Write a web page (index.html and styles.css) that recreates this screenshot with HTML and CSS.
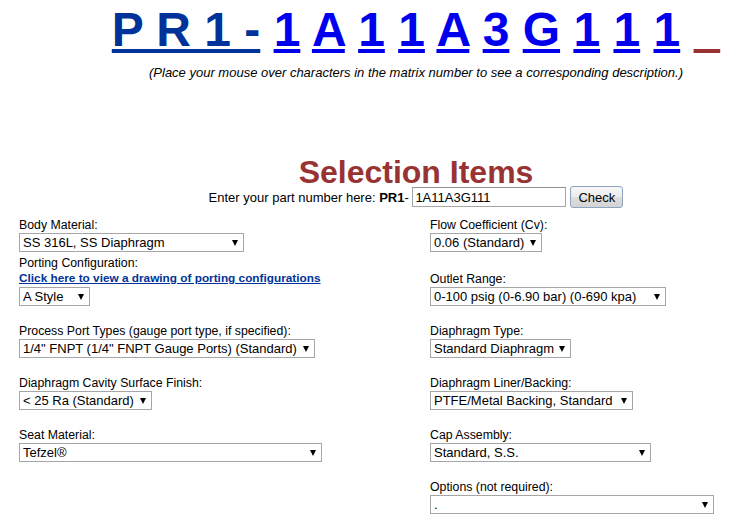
FILE: index.html
```html
<!DOCTYPE html>
<html lang="en">
<head>
    <meta charset="UTF-8">
    <title>Regulator Matrix - Selection Items</title>
    <link rel="stylesheet" href="styles.css">
</head>
<body>
    <div class="matrix">
        <div class="matrix-code">
            <a href="#" class="prefix">P R 1 -</a>
            <a href="#">1</a>
            <a href="#">A</a>
            <a href="#">1</a>
            <a href="#">1</a>
            <a href="#">A</a>
            <a href="#">3</a>
            <a href="#">G</a>
            <a href="#">1</a>
            <a href="#">1</a>
            <a href="#">1</a>
            <span class="cursor">&nbsp;&nbsp;</span>
        </div>
        <p class="hint">(Place your mouse over characters in the matrix number to see a corresponding description.)</p>

        <h1 class="title">Selection Items</h1>
        <form class="part-form">
            Enter your part number here:&nbsp;<b>PR1</b>-&nbsp;<input class="part-input" type="text" value="1A11A3G111">
            <button class="check-btn" type="button">Check</button>
        </form>
    </div>

    <div class="fields">
        <div class="col">
            <div class="field first">
                <label>Body Material:</label>
                <span class="sel"><select class="w-body"><option>SS 316L, SS Diaphragm</option></select></span>
            </div>
            <div class="field">
                <label>Porting Configuration:</label>
                <a href="#" class="drawing-link">Click here to view a drawing of porting configurations</a>
                <span class="sel"><select class="w-style"><option>A Style</option></select></span>
            </div>
            <div class="field">
                <label>Process Port Types (gauge port type, if specified):</label>
                <span class="sel"><select class="w-port"><option>1/4" FNPT (1/4" FNPT Gauge Ports) (Standard)</option></select></span>
            </div>
            <div class="field">
                <label>Diaphragm Cavity Surface Finish:</label>
                <span class="sel"><select class="w-finish"><option>&lt; 25 Ra (Standard)</option></select></span>
            </div>
            <div class="field">
                <label>Seat Material:</label>
                <span class="sel"><select class="w-seat"><option>Tefzel®</option></select></span>
            </div>
        </div>
        <div class="col">
            <div class="field wide-gap">
                <label>Flow Coefficient (Cv):</label>
                <span class="sel"><select class="w-flow"><option>0.06 (Standard)</option></select></span>
            </div>
            <div class="field">
                <label>Outlet Range:</label>
                <span class="sel"><select class="w-outlet"><option>0-100 psig (0-6.90 bar) (0-690 kpa)</option></select></span>
            </div>
            <div class="field">
                <label>Diaphragm Type:</label>
                <span class="sel"><select class="w-type"><option>Standard Diaphragm</option></select></span>
            </div>
            <div class="field">
                <label>Diaphragm Liner/Backing:</label>
                <span class="sel"><select class="w-liner"><option>PTFE/Metal Backing, Standard</option></select></span>
            </div>
            <div class="field">
                <label>Cap Assembly:</label>
                <span class="sel"><select class="w-cap"><option>Standard, S.S.</option></select></span>
            </div>
            <div class="field">
                <label>Options (not required):</label>
                <span class="sel"><select class="w-options"><option>.</option></select></span>
            </div>
        </div>
    </div>
</body>
</html>
```

FILE: styles.css
```css
body {
    font-family: Arial, "Liberation Sans", sans-serif;
    font-size: 13px;
    color: #000000;
    background-color: #ffffff;
    margin: 0;
    padding: 0;
}

/* Matrix number header */
.matrix {
    padding-left: 97px;
    text-align: center;
}

.matrix-code {
    padding-top: 6px;
    font-size: 48px;
    line-height: 48px;
    font-weight: bold;
    white-space: nowrap;
}

.matrix-code a {
    color: #0000ee;
    text-decoration: underline;
}

.matrix-code a.prefix {
    color: #003399;
}

.cursor {
    color: #993333;
    text-decoration: underline;
}

.hint {
    margin: 11px 0 0 0;
    font-style: italic;
    line-height: 15px;
}

.title {
    margin: 78px 0 0 0;
    font-size: 32px;
    line-height: 28px;
    font-weight: bold;
    color: #993333;
}

.part-form {
    display: flex;
    justify-content: center;
    align-items: center;
    height: 22px;
    margin: 0;
    white-space: nowrap;
}

.part-input {
    width: 154px;
    height: 20px;
    box-sizing: border-box;
    border: 1px solid #a5a5a5;
    border-top-color: #8e8e8e;
    padding: 0 2px;
    font-family: Arial, "Liberation Sans", sans-serif;
    font-size: 13px;
    color: #000;
}

.check-btn {
    margin-left: 4px;
    width: 53px;
    height: 22px;
    box-sizing: border-box;
    border: 1px solid #8fa4c2;
    border-radius: 3px;
    background: linear-gradient(#f7f7f7 0%, #ececec 50%, #dedede 51%, #d3d3d3 100%);
    font-family: Arial, "Liberation Sans", sans-serif;
    font-size: 13px;
    color: #000;
    padding: 0;
}

/* Selection fields */
.fields {
    display: grid;
    grid-template-columns: 411px 1fr;
    padding-left: 19px;
    margin-top: 10px;
}

.col {
    display: flex;
    flex-direction: column;
    align-items: flex-start;
}

.field {
    display: flex;
    flex-direction: column;
    align-items: flex-start;
    margin-bottom: 18px;
}

.field.first {
    margin-bottom: 4px;
}

.field.wide-gap {
    margin-bottom: 20px;
}

.field label {
    font-size: 12.3px;
    line-height: 15px;
}

.drawing-link {
    color: #003399;
    font-size: 11.8px;
    font-weight: bold;
    line-height: 15px;
    margin-bottom: 1px;
}

.sel {
    position: relative;
    display: inline-block;
}

.sel::after {
    content: "";
    position: absolute;
    right: 6px;
    top: 7px;
    border-left: 3.5px solid transparent;
    border-right: 3.5px solid transparent;
    border-top: 6px solid #000;
    pointer-events: none;
}

.sel select {
    -webkit-appearance: none;
    appearance: none;
    display: block;
    height: 19px;
    box-sizing: border-box;
    border: 1px solid #a6a6a6;
    border-radius: 0;
    background: #ffffff;
    padding: 0 14px 0 3px;
    font-family: Arial, "Liberation Sans", sans-serif;
    font-size: 13px;
    line-height: 17px;
    color: #000;
}

.w-body { width: 225px; }
.w-style { width: 71px; }
.w-port { width: 296px; }
.w-finish { width: 133px; }
.w-seat { width: 303px; }
.w-flow { width: 112px; }
.w-outlet { width: 236px; }
.w-type { width: 141px; }
.w-liner { width: 203px; }
.w-cap { width: 221px; }
.w-options { width: 284px; }
```
